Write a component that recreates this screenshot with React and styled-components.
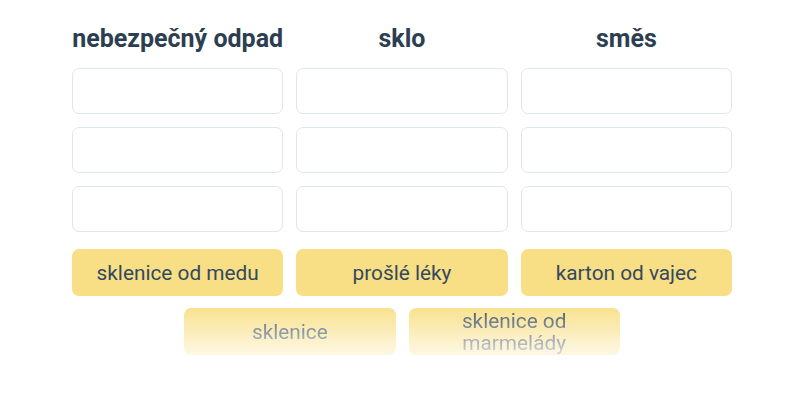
import React from "react";
import styled, { createGlobalStyle } from "styled-components";

const GlobalStyle = createGlobalStyle`
  body {
    margin: 0;
    background: #ffffff;
    font-family: Roboto, "Noto Sans", sans-serif;
  }
`;

const Page = styled.div`
  width: 660px;
  margin-left: 72px;
  padding-top: 24px;
`;

const Columns = styled.div`
  display: grid;
  grid-template-columns: repeat(3, minmax(0, 1fr));
  column-gap: 13px;
`;

const Column = styled.div`
  display: flex;
  flex-direction: column;
  gap: 13px;
`;

const Title = styled.h2`
  margin: 0 0 1px;
  font-size: 25px;
  line-height: 30px;
  font-weight: 700;
  color: #2c3e50;
  text-align: center;
  white-space: nowrap;
`;

const Slot = styled.div`
  height: 46px;
  box-sizing: border-box;
  border: 1px solid #e1e6ea;
  border-radius: 7px;
  background: #ffffff;
`;

const Bank = styled.div`
  margin-top: 17px;
  display: flex;
  flex-direction: column;
  gap: 12px;
`;

const BankRow = styled.div`
  display: flex;
  justify-content: center;
  gap: 13px;
  ${(p) =>
    p.$faded &&
    `
    -webkit-mask-image: linear-gradient(to bottom, rgba(0,0,0,0.92) 0%, rgba(0,0,0,0.22) 100%);
    mask-image: linear-gradient(to bottom, rgba(0,0,0,0.92) 0%, rgba(0,0,0,0.22) 100%);
  `}
`;

const Card = styled.div`
  width: calc((100% - 26px) / 3);
  height: 47px;
  box-sizing: border-box;
  padding: 0 12px;
  border-radius: 7px;
  background: #f8df85;
  color: #34495e;
  font-size: 20.8px;
  line-height: 22px;
  display: flex;
  align-items: center;
  justify-content: center;
  text-align: center;
`;

const columns = ["nebezpečný odpad", "sklo", "směs"];

export default function App() {
  return (
    <>
      <GlobalStyle />
      <Page>
        <Columns>
          {columns.map((name) => (
            <Column key={name}>
              <Title>{name}</Title>
              <Slot />
              <Slot />
              <Slot />
            </Column>
          ))}
        </Columns>
        <Bank>
          <BankRow>
            <Card>sklenice od medu</Card>
            <Card>prošlé léky</Card>
            <Card>karton od vajec</Card>
          </BankRow>
          <BankRow $faded>
            <Card>sklenice</Card>
            <Card>sklenice od marmelády</Card>
          </BankRow>
        </Bank>
      </Page>
    </>
  );
}
